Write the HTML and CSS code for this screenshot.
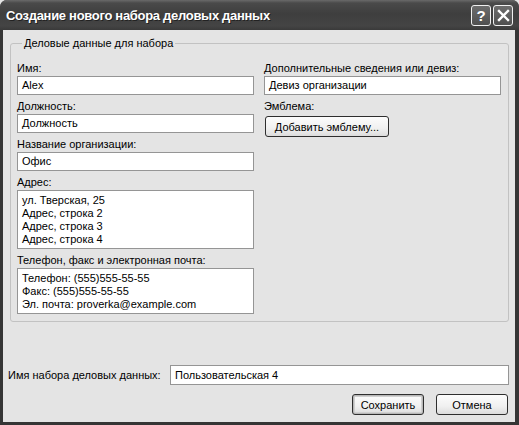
FILE: index.html
```html
<!DOCTYPE html>
<html lang="ru">
<head>
<meta charset="utf-8">
<title>Создание нового набора деловых данных</title>
<link rel="stylesheet" href="styles.css">
</head>
<body>
<div class="window">
  <div class="titlebar">
    <span class="title">Создание нового набора деловых данных</span>
    <div class="tb-buttons">
      <span class="tb-btn help">?</span>
      <span class="tb-btn close"><svg width="13" height="13" viewBox="0 0 13 13"><path d="M2 2 L11 11 M11 2 L2 11" stroke="#fff" stroke-width="2.4" stroke-linecap="square"/></svg></span>
    </div>
  </div>
  <div class="client">
    <fieldset class="group">
      <legend>Деловые данные для набора</legend>
      <div class="cols">
        <div class="col">
          <div class="lbl">Имя:</div>
          <div class="field">Alex</div>
          <div class="lbl">Должность:</div>
          <div class="field">Должность</div>
          <div class="lbl">Название организации:</div>
          <div class="field">Офис</div>
          <div class="lbl">Адрес:</div>
          <div class="area addr">ул. Тверская, 25<br>Адрес, строка 2<br>Адрес, строка 3<br>Адрес, строка 4</div>
          <div class="lbl">Телефон, факс и электронная почта:</div>
          <div class="area phone">Телефон: (555)555-55-55<br>Факс: (555)555-55-55<br>Эл. почта: proverka@example.com</div>
        </div>
        <div class="col">
          <div class="lbl">Дополнительные сведения или девиз:</div>
          <div class="field">Девиз организации</div>
          <div class="lbl">Эмблема:</div>
          <div class="btn logo-btn">Добавить эмблему...</div>
        </div>
      </div>
    </fieldset>
    <div class="name-row">
      <span class="name-lbl">Имя набора деловых данных:</span>
      <div class="field wide">Пользовательская 4</div>
    </div>
    <div class="actions">
      <div class="btn act default">Сохранить</div>
      <div class="btn act">Отмена</div>
    </div>
  </div>
</div>
</body>
</html>
```

FILE: styles.css
```css
* { box-sizing: border-box; }
html, body { margin: 0; padding: 0; background: #e4e4e4; }
body { font-family: "Liberation Sans", Arial, sans-serif; font-size: 11px; color: #000; }

.window {
  width: 519px;
  height: 425px;
  background: #353535;
  display: flex;
  flex-direction: column;
  border-radius: 7px 7px 0 0;
  overflow: hidden;
}

.titlebar {
  height: 30px;
  flex: none;
  display: flex;
  align-items: center;
  justify-content: space-between;
  padding: 0 6px 0 6px;
  background: linear-gradient(#6a6a6a 0px, #4a4a4a 3px, #3e3e3e 14px, #444 26px, #3a3a3a 30px);
}
.title {
  color: #fff;
  font-weight: bold;
  font-size: 13px;
  text-shadow: 1px 1px 0 #222;
  letter-spacing: -0.3px;
  margin-top: 1px;
}
.tb-buttons { display: flex; gap: 2px; margin-top: 1px; }
.tb-btn {
  width: 20px;
  height: 21px;
  border: 1px solid #f0f0f0;
  border-radius: 3px;
  background: linear-gradient(#6c6c6c, #505050);
  color: #fff;
  display: flex;
  align-items: center;
  justify-content: center;
  font-weight: bold;
  font-size: 15px;
}

.client {
  flex: 1;
  margin: 0 4px 3px 3px;
  background: #e4e4e4;
  display: flex;
  flex-direction: column;
  padding: 7px 6px 0 5px;
}

.group {
  margin: 0 0 0 2px;
  width: 499px;
  border: 1px solid #c2c2c2;
  border-radius: 3px;
  padding: 12px 7px 7px 6px;
}
.group legend {
  padding: 0 2px;
  margin-left: 5px;
  line-height: 13px;
  color: #000;
}
.cols {
  display: grid;
  grid-template-columns: 237px 237px;
  column-gap: 10px;
  align-items: start;
}
.col { display: flex; flex-direction: column; }
.lbl { line-height: 13px; height: 13px; margin-bottom: 1px; white-space: nowrap; }
.field {
  height: 19px;
  border: 1px solid #959595;
  background: #fff;
  padding: 0 4px;
  line-height: 17px;
  margin-bottom: 5px;
  white-space: nowrap;
}
.area {
  border: 1px solid #959595;
  background: #fff;
  padding: 3px 4px;
  line-height: 13px;
  margin-bottom: 5px;
}
.addr { height: 59px; }
.phone { height: 46px; margin-bottom: 0; }

.btn {
  height: 21px;
  border: 1px solid #2e2e2e;
  border-radius: 3px;
  background: linear-gradient(#fcfcfc, #f0f0f0 60%, #dcdcdc);
  display: flex;
  align-items: center;
  justify-content: center;
  white-space: nowrap;
}
.logo-btn { width: 124px; margin-top: 2px; margin-left: 1px; }

.name-row {
  display: flex;
  align-items: center;
  justify-content: space-between;
  margin-top: 43px;
}
.name-lbl { padding-left: 0; }
.field.wide { width: 339px; height: 20px; line-height: 18px; margin-bottom: 0; }

.actions {
  display: flex;
  justify-content: flex-end;
  gap: 12px;
  margin-top: 9px;
  padding-right: 1px;
}
.act { width: 72px; }
.act.default { box-shadow: inset 0 0 0 1px #b8b8b8, inset 0 0 0 2px #d0d0d0; }
```
